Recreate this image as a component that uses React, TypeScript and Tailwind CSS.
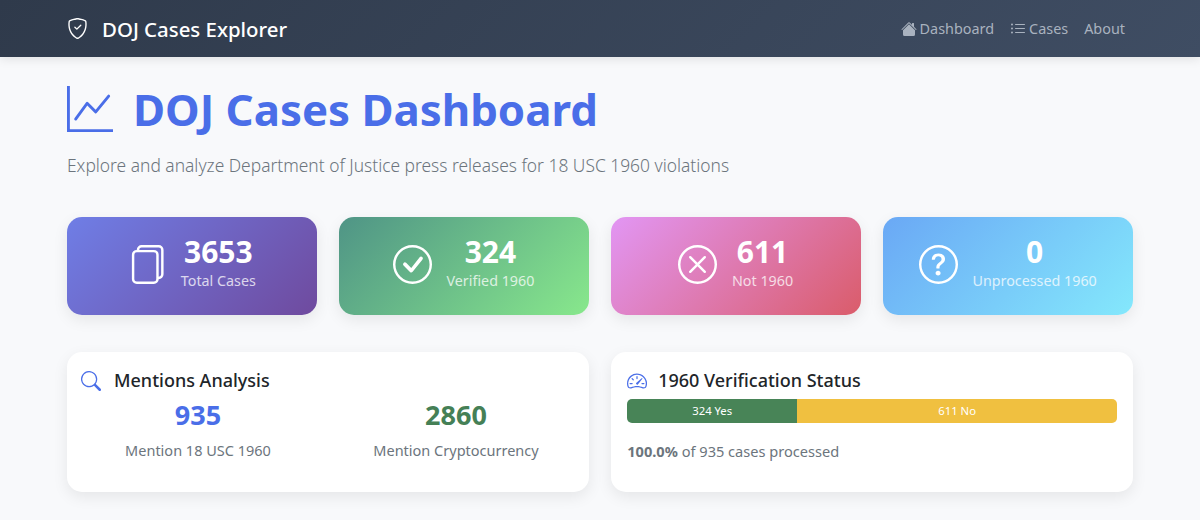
import { BsShieldCheck, BsGraphUp, BsHouseFill, BsListUl, BsFiles, BsCheckCircle, BsXCircle, BsQuestionCircle, BsSearch, BsSpeedometer2 } from "react-icons/bs";
import type { ComponentType } from "react";

function Stat({ icon: Icon, value, label, bg }: { icon: ComponentType<{ className?: string }>; value: string; label: string; bg: string }) {
  return (
    <div className={`h-[98px] pb-[4px] pr-[1px] rounded-[15px] shadow-[0_5px_15px_rgba(0,0,0,0.08)] flex items-center justify-center gap-[15px] text-white ${bg}`}>
      <Icon className="w-[39px] h-[39px] shrink-0" />
      <div className="text-center mb-[4px]">
        <div className="text-[30px] leading-[36px] font-bold">{value}</div>
        <div className="text-[14.3px] leading-[20px] opacity-75 mt-[1px]">{label}</div>
      </div>
    </div>
  );
}

export default function App() {
  return (
    <div className="w-[1200px] h-[520px] overflow-hidden bg-[#f8f9fb] font-['Noto_Sans','Open_Sans',sans-serif]">
      <nav className="h-[57px] pt-[1px] bg-[linear-gradient(135deg,#2f3a4b,#3f4d63)] shadow-[0_2px_10px_rgba(0,0,0,0.1)] flex items-center justify-between pl-[67px] pr-[75px]">
        <div className="flex items-center gap-[14px] text-white text-[20.4px] font-medium">
          <BsShieldCheck className="w-[21px] h-[21px]" />
          <span>DOJ Cases Explorer</span>
        </div>
        <div className="flex items-center gap-[16px] text-[14.4px] text-[#a9b2bf]">
          <span className="flex items-center gap-[3px]"><BsHouseFill className="w-[16px] h-[16px]" />Dashboard</span>
          <span className="flex items-center gap-[3px]"><BsListUl className="w-[16px] h-[16px]" />Cases</span>
          <span>About</span>
        </div>
      </nav>
      <main className="px-[67px]">
        <div className="flex items-center gap-[20px] mt-[26px] h-[52px]">
          <BsGraphUp className="w-[46px] h-[46px] text-[#4a6ee8]" />
          <h1 className="text-[43.8px] leading-[52px] font-bold text-[#4a6ee8]">DOJ Cases Dashboard</h1>
        </div>
        <p className="mt-[16px] text-[17.4px] leading-[28px] font-light text-[#6c757d]">Explore and analyze Department of Justice press releases for 18 USC 1960 violations</p>
        <div className="grid grid-cols-4 gap-[22.4px] mt-[38px]">
          <Stat icon={BsFiles} value="3653" label="Total Cases" bg="bg-[linear-gradient(135deg,#6f7ee6,#6f4a9e)]" />
          <Stat icon={BsCheckCircle} value="324" label="Verified 1960" bg="bg-[linear-gradient(135deg,#4f9486,#88e88c)]" />
          <Stat icon={BsXCircle} value="611" label="Not 1960" bg="bg-[linear-gradient(135deg,#e296f4,#da5c6a)]" />
          <Stat icon={BsQuestionCircle} value="0" label="Unprocessed 1960" bg="bg-[linear-gradient(135deg,#6aa8f5,#84e8fc)]" />
        </div>
        <div className="grid grid-cols-2 gap-[22.4px] mt-[37px]">
          <section className="h-[140px] rounded-[15px] bg-white shadow-[0_5px_15px_rgba(0,0,0,0.08)] px-[14px] pt-[15px]">
            <div className="flex items-center gap-[13px] h-[27px]">
              <BsSearch className="w-[20px] h-[20px] text-[#4a6ee8]" />
              <h2 className="text-[18px] font-medium text-[#212529]">Mentions Analysis</h2>
            </div>
            <div className="grid grid-cols-2 text-center w-[516px] -ml-[12px] mt-[4px]">
              <div>
                <div className="text-[27px] leading-[34px] font-bold text-[#4a6ee8]">935</div>
                <div className="text-[14.5px] leading-[22px] text-[#6c757d] mt-[7px]">Mention 18 USC 1960</div>
              </div>
              <div>
                <div className="text-[27px] leading-[34px] font-bold text-[#458056]">2860</div>
                <div className="text-[14.5px] leading-[22px] text-[#6c757d] mt-[7px]">Mention Cryptocurrency</div>
              </div>
            </div>
          </section>
          <section className="h-[140px] rounded-[15px] bg-white shadow-[0_5px_15px_rgba(0,0,0,0.08)] px-[16px] pt-[15px]">
            <div className="flex items-center gap-[11px] h-[27px]">
              <BsSpeedometer2 className="w-[20px] h-[20px] text-[#4a6ee8]" />
              <h2 className="text-[18px] font-medium text-[#212529]">1960 Verification Status</h2>
            </div>
            <div className="flex h-[24px] mt-[5px] rounded-[5px] overflow-hidden text-[11.3px] text-white">
              <div className="w-[170px] bg-[#488457] flex items-center justify-center">324 Yes</div>
              <div className="flex-1 bg-[#f0c040] flex items-center justify-center">611 No</div>
            </div>
            <p className="mt-[17px] text-[14.6px] leading-[22px] text-[#6c757d]"><strong className="font-bold">100.0%</strong> of 935 cases processed</p>
          </section>
        </div>
      </main>
    </div>
  );
}
